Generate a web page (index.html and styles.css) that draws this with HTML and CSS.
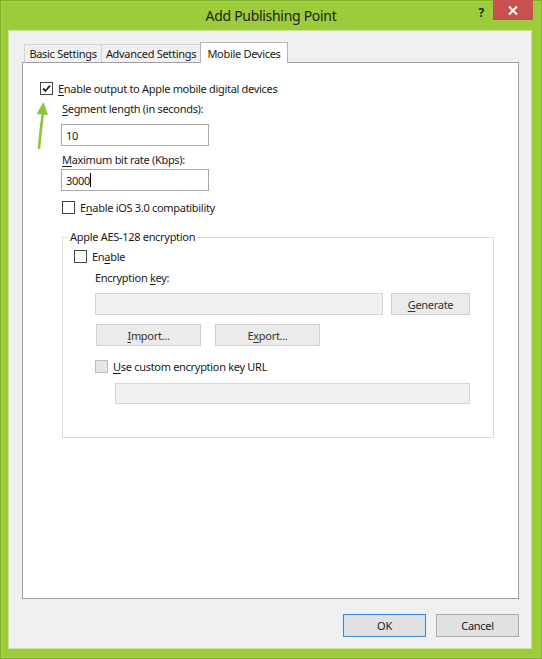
FILE: index.html
```html
<!DOCTYPE html>
<html lang="en">
<head>
<meta charset="utf-8">
<title>Add Publishing Point</title>
<link rel="stylesheet" href="styles.css">
</head>
<body>
<div class="window">
  <div class="titlebar">
    <span class="title">Add Publishing Point</span>
    <div class="caption-buttons">
      <span class="help">?</span>
      <span class="close">
        <svg width="10" height="9" viewBox="0 0 10 9"><path d="M1 0.5 L9 8.5 M9 0.5 L1 8.5" stroke="#fff" stroke-width="2" fill="none"/></svg>
      </span>
    </div>
  </div>

  <div class="client">
    <div class="tabs">
      <div class="tab tab-basic">Basic Settings</div>
      <div class="tab tab-advanced">Advanced Settings</div>
      <div class="tab tab-mobile active">Mobile Devices</div>
    </div>

    <div class="panel">
      <label class="check-row">
        <span class="checkbox checked">
          <svg width="11" height="11" viewBox="0 0 11 11"><path d="M2 5.5 L4.5 8 L9 2.5" stroke="#222" stroke-width="1.8" fill="none"/></svg>
        </span>
        <span><u>E</u>nable output to Apple mobile digital devices</span>
      </label>

      <div class="indent">
        <div class="field-label label-segment"><u>S</u>egment length (in seconds):</div>
        <div class="textbox textbox-short">10</div>
        <div class="field-label label-bitrate"><u>M</u>aximum bit rate (Kbps):</div>
        <div class="textbox textbox-short textbox-bitrate">3000<span class="caret"></span></div>

        <label class="check-row check-ios">
          <span class="checkbox"></span>
          <span>E<u>n</u>able iOS 3.0 compatibility</span>
        </label>

        <fieldset class="group">
          <legend>Apple AES-128 encryption</legend>
          <label class="check-row check-enable">
            <span class="checkbox"></span>
            <span>En<u>a</u>ble</span>
          </label>
          <div class="encryption">
            <div class="field-label label-key">Encryption <u>k</u>ey:</div>
            <div class="key-row">
              <div class="textbox textbox-disabled textbox-key"></div>
              <button class="btn btn-light btn-generate"><u>G</u>enerate</button>
            </div>
            <div class="io-row">
              <button class="btn btn-light btn-io"><u>I</u>mport...</button>
              <button class="btn btn-light btn-io">E<u>x</u>port...</button>
            </div>
            <label class="check-row check-url">
              <span class="checkbox disabled"></span>
              <span><u>U</u>se custom encryption key URL</span>
            </label>
            <div class="textbox textbox-disabled textbox-url"></div>
          </div>
        </fieldset>
      </div>

      <svg class="pointer-arrow" width="20" height="52" viewBox="0 0 20 52">
        <path d="M6 49 C7 38 8 27 10 14" stroke="#8cc43c" stroke-width="2.6" fill="none" stroke-linecap="round"/>
        <path d="M3.5 15 L10.5 3 L15 16 Z" fill="#8cc43c"/>
      </svg>
    </div>

    <div class="footer">
      <button class="btn btn-default">OK</button>
      <button class="btn">Cancel</button>
    </div>
  </div>
</div>
</body>
</html>
```

FILE: styles.css
```css
* {
  box-sizing: border-box;
}

html, body {
  margin: 0;
  padding: 0;
  background: #ffffff;
}

body {
  font-family: "Noto Sans", "Open Sans", sans-serif;
  font-size: 11px;
  letter-spacing: -0.3px;
  color: #1a1a1a;
}

u {
  text-decoration-thickness: 1px;
  text-underline-offset: 2px;
}

/* Window frame */
.window {
  position: relative;
  width: 542px;
  height: 659px;
  background: #9ccb3c;
  padding: 31px 11px 11px 9px;
  box-shadow: inset 0 0 0 1px #7fae27, inset 0 0 0 2px #a6d446;
  display: flex;
  flex-direction: column;
}

.titlebar {
  position: absolute;
  top: 0;
  left: 0;
  right: 0;
  height: 31px;
  display: flex;
  justify-content: center;
  align-items: center;
}

.title {
  font-size: 14px;
  color: #1f1f1f;
  margin-top: -1px;
}

.caption-buttons {
  position: absolute;
  top: 0;
  right: 9px;
  display: flex;
  align-items: flex-start;
}

.help {
  font-weight: bold;
  font-size: 12px;
  color: #1e2a10;
  margin-top: 4px;
  margin-right: 9px;
}

.close {
  width: 40px;
  height: 20px;
  background: #c75050;
  display: flex;
  align-items: center;
  justify-content: center;
}

/* Client area */
.client {
  flex: 1;
  background: #f0f0f0;
  padding: 11px 12px 0 13px;
  display: flex;
  flex-direction: column;
  box-shadow: 0 0 0 1px #c8e58e;
}

.tabs {
  height: 20px;
  display: flex;
  align-items: flex-end;
  padding-left: 2px;
  position: relative;
  z-index: 1;
}

.tab {
  height: 18px;
  border: 1px solid #d2d2d2;
  border-bottom: none;
  background: #f0f0f0;
  display: flex;
  align-items: center;
  justify-content: center;
  white-space: nowrap;
}

.tab-basic {
  width: 78px;
}

.tab-advanced {
  width: 100px;
  margin-left: -1px;
}

.tab-mobile {
  width: 88px;
  margin-left: -1px;
}

.tab.active {
  height: 21px;
  background: #ffffff;
  border-color: #b4b4b4;
  margin-bottom: -1px;
}

.panel {
  position: relative;
  height: 537px;
  background: #ffffff;
  border: 1px solid #a0a0a0;
  padding: 17px 0 0 17px;
}

/* Checkbox rows */
.check-row {
  display: flex;
  align-items: center;
  height: 16px;
  gap: 5px;
  white-space: nowrap;
}

.checkbox {
  width: 13px;
  height: 13px;
  border: 1px solid #444444;
  background: #ffffff;
  display: flex;
  align-items: center;
  justify-content: center;
  flex: none;
}

.checkbox.disabled {
  border-color: #bcbcbc;
  background: #e6e6e6;
}

.indent {
  margin-left: 22px;
  display: flex;
  flex-direction: column;
  align-items: flex-start;
}

.field-label {
  height: 16px;
  line-height: 16px;
  white-space: nowrap;
}

.label-segment {
  margin-top: 5px;
}

.label-bitrate {
  margin-top: 6px;
}

.textbox {
  height: 22px;
  border: 1px solid #a8a8a8;
  background: #ffffff;
  padding: 0 4px;
  display: flex;
  align-items: center;
}

.textbox-short {
  width: 148px;
  margin-left: -1px;
  margin-top: 7px;
}

.textbox-bitrate {
  margin-top: 1px;
}

.caret {
  width: 1px;
  height: 14px;
  background: #000000;
}

.textbox-disabled {
  background: #f0f0f0;
  border-color: #d5d5d5;
}

.check-ios {
  margin-top: 8px;
}

/* Encryption group */
.group {
  margin: 14px 0 0 0;
  padding: 0 0 0 11px;
  width: 432px;
  height: 209px;
  border: 1px solid #dcdcdc;
  min-width: 0;
}

.group legend {
  padding: 0 2px;
  margin-left: -6px;
  line-height: 16px;
}

.check-enable {
  margin-top: 3px;
}

.encryption {
  margin-left: 21px;
  display: flex;
  flex-direction: column;
  align-items: flex-start;
}

.label-key {
  margin-top: 6px;
}

.key-row {
  margin-top: 7px;
  display: flex;
  gap: 8px;
}

.textbox-key {
  width: 288px;
}

.btn {
  font-family: inherit;
  font-size: 11px;
  letter-spacing: inherit;
  color: #1a1a1a;
  height: 23px;
  width: 83px;
  padding: 0;
  border: 1px solid #acacac;
  background: #e1e1e1;
  border-radius: 0;
}

.btn-light {
  height: 22px;
  border-color: #cfcfcf;
  background: #ebebeb;
  color: #333333;
}

.btn-generate {
  width: 79px;
}

.io-row {
  margin-top: 9px;
  margin-left: 1px;
  display: flex;
  gap: 14px;
}

.btn-io {
  width: 105px;
}

.check-url {
  margin-top: 12px;
}

.textbox-url {
  margin-top: 9px;
  margin-left: 20px;
  width: 355px;
  height: 21px;
}

.pointer-arrow {
  position: absolute;
  left: 10px;
  top: 36px;
}

/* Dialog buttons */
.footer {
  margin-top: 15px;
  display: flex;
  justify-content: flex-end;
  gap: 10px;
}

.btn-default {
  border-color: #3c8ad6;
  box-shadow: inset 0 0 0 1px #c9e2f7;
}
```
